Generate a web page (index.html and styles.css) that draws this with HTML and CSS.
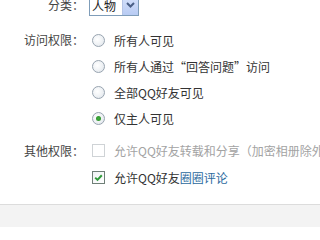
FILE: index.html
```html
<!DOCTYPE html>
<html lang="zh-CN">
<head>
<meta charset="utf-8">
<title>权限设置</title>
<link rel="stylesheet" href="styles.css">
</head>
<body>
<div class="page">
  <div class="form">
    <div class="row cat">
      <div class="label">分类：</div>
      <div class="ctrl">
        <div class="select">
          <span class="sel-text">人物</span>
          <span class="sel-btn">
            <svg width="9" height="6" viewBox="0 0 9 6"><path d="M1 1 L4.5 4.5 L8 1" fill="none" stroke="#4a5f86" stroke-width="2"/></svg>
          </span>
        </div>
      </div>
    </div>

    <div class="group access">
      <div class="label">访问权限：</div>
      <div class="opts">
        <div class="opt"><span class="radio"></span><span class="txt">所有人可见</span></div>
        <div class="opt"><span class="radio"></span><span class="txt">所有人通过<span class="fw">“</span>回答问题<span class="fw">”</span>访问</span></div>
        <div class="opt"><span class="radio"></span><span class="txt">全部QQ好友可见</span></div>
        <div class="opt"><span class="radio on"></span><span class="txt">仅主人可见</span></div>
      </div>
    </div>

    <div class="group other">
      <div class="label">其他权限：</div>
      <div class="opts">
        <div class="opt tall"><span class="check disabled"></span><span class="txt dim">允许QQ好友转载和分享（加密相册除外）</span></div>
        <div class="opt tall"><span class="check on">
          <svg width="11" height="11" viewBox="0 0 11 11"><path d="M2.2 5.6 L4.5 7.9 L8.8 3.2" fill="none" stroke="#2f9a3a" stroke-width="2"/></svg>
        </span><span class="txt">允许QQ好友<a class="link">圈圈评论</a></span></div>
      </div>
    </div>
  </div>
  <div class="footer"></div>
</div>
</body>
</html>
```
FILE: styles.css
```css
html, body {
  margin: 0;
  padding: 0;
  background: #fff;
  overflow: hidden;
}
body {
  font-family: "Noto Sans CJK SC", "Noto Sans", sans-serif;
  font-size: 12px;
  color: #3a3a3a;
  height: 227px;
}
.page {
  display: flex;
  flex-direction: column;
  height: 227px;
}
.form {
  margin-top: -6px;
  white-space: nowrap;
}
.row, .group {
  display: grid;
  grid-template-columns: 84px 1fr;
  column-gap: 8px;
}
.label {
  text-align: right;
  line-height: 26px;
  color: #444;
}
.cat {
  height: 22px;
  align-items: center;
}
.cat .label {
  line-height: 22px;
  margin-left: -3px;
}
.cat .ctrl {
  margin-left: -3px;
}
.select {
  width: 48px;
  height: 19px;
  border: 1px solid #7f9db9;
  background: #fff;
  display: flex;
  align-items: stretch;
}
.sel-text {
  flex: 1;
  line-height: 19px;
  padding-left: 2px;
  color: #222;
  font-size: 12px;
}
.sel-btn {
  width: 15px;
  background: linear-gradient(#d6e2fb, #b8cbf3);
  border-left: 1px solid #b4c4e6;
  display: flex;
  align-items: center;
  justify-content: center;
}
.access {
  margin-top: 11px;
}
.other {
  margin-top: 6px;
}
.opts {
  display: flex;
  flex-direction: column;
}
.opt {
  height: 26px;
  display: flex;
  align-items: center;
  gap: 9px;
}
.opt.tall {
  height: 27px;
}
.other .label {
  line-height: 27px;
}
.radio {
  width: 11px;
  height: 11px;
  border: 1px solid #98a4b0;
  border-radius: 50%;
  background: radial-gradient(circle at 40% 40%, #ffffff 0%, #eef1f4 55%, #d9dfe6 100%);
  flex: none;
  position: relative;
}
.radio.on::after {
  content: "";
  position: absolute;
  left: 3px;
  top: 3px;
  width: 5px;
  height: 5px;
  border-radius: 50%;
  background: radial-gradient(circle, #3fae3a 0%, #2b8a2b 100%);
}
.check {
  width: 11px;
  height: 11px;
  border: 1px solid #6f7f77;
  background: linear-gradient(135deg, #f0f2f4, #ffffff);
  flex: none;
  display: flex;
  align-items: center;
  justify-content: center;
}
.check.disabled {
  border-color: #cfd3d6;
  background: #fff;
}
.txt {
  color: #333;
}
.fw {
  display: inline-block;
  width: 12px;
  text-align: center;
}
.txt.dim {
  color: #a3a3a3;
}
.link {
  color: #2c6a9e;
  text-decoration: none;
}
.footer {
  margin-top: 13px;
  flex: 1;
  background: #f3f3f3;
  border-top: 1px solid #dcdcdc;
}
```
